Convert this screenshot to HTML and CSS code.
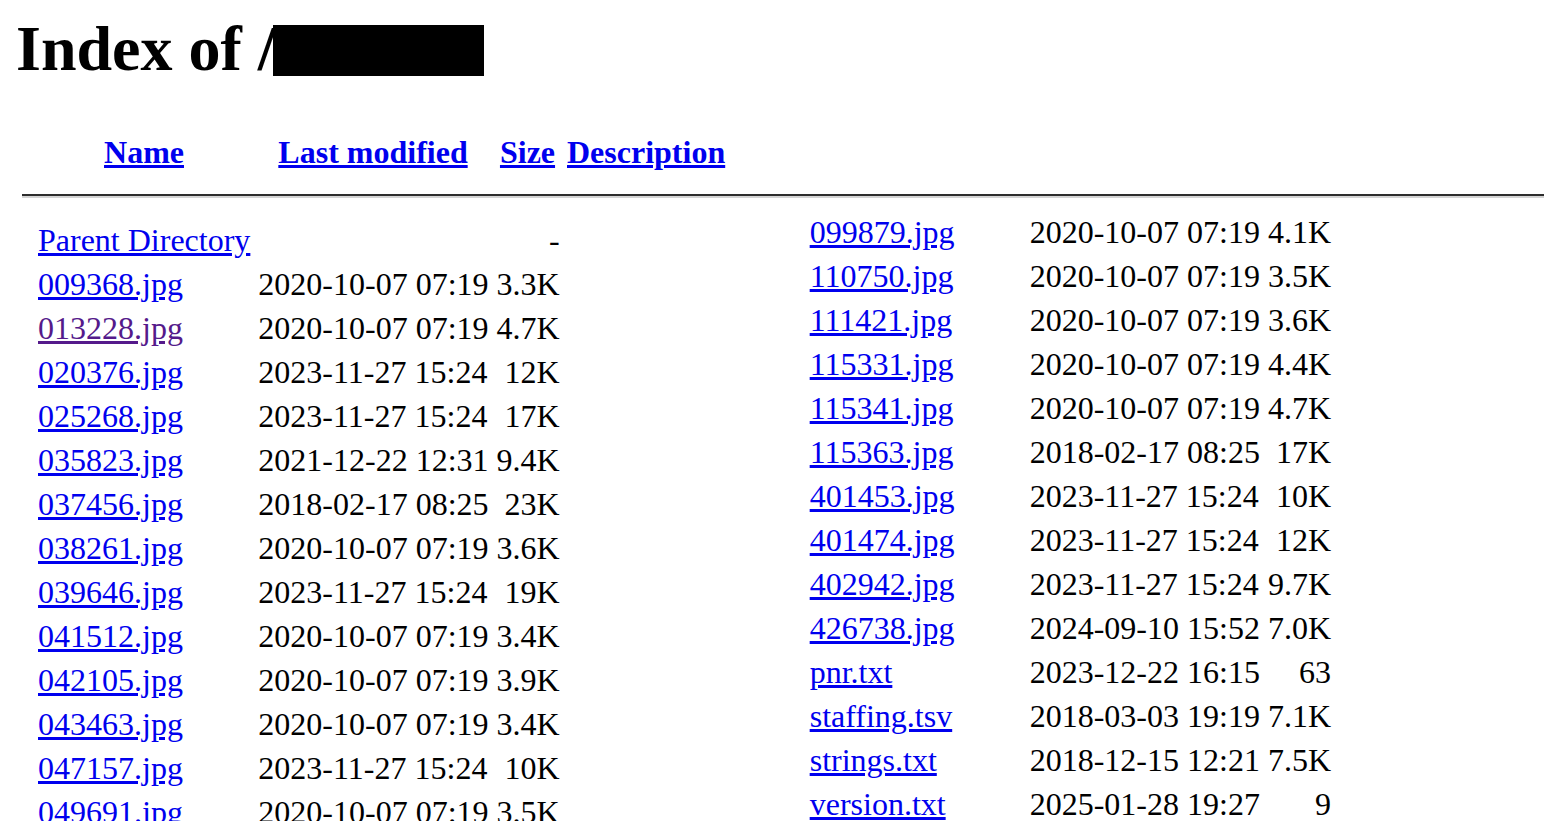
FILE: index.html
```html
<!DOCTYPE html>
<html lang="en">
<head>
    <meta charset="UTF-8">
    <title>Index of /</title>
    <link rel="stylesheet" href="styles.css">
</head>
<body>
    <h1>Index of /<span class="redacted"></span></h1>

    <table class="listing">
        <tr>
            <th class="icon"></th>
            <th class="name"><a href="?C=N;O=D">Name</a></th>
            <th class="date"><a href="?C=M;O=A">Last modified</a></th>
            <th class="size"><a href="?C=S;O=A">Size</a></th>
            <th class="desc"><a href="?C=D;O=A">Description</a></th>
        </tr>
    </table>
    <hr>

    <div class="columns">
        <table class="listing">
            <tr><td class="icon"></td><td class="name"><a href="../">Parent Directory</a></td><td class="date"></td><td class="size">-</td><td class="desc"></td></tr>
            <tr><td class="icon"></td><td class="name"><a href="009368.jpg">009368.jpg</a></td><td class="date">2020-10-07 07:19</td><td class="size">3.3K</td><td class="desc"></td></tr>
            <tr><td class="icon"></td><td class="name"><a class="visited" href="013228.jpg">013228.jpg</a></td><td class="date">2020-10-07 07:19</td><td class="size">4.7K</td><td class="desc"></td></tr>
            <tr><td class="icon"></td><td class="name"><a href="020376.jpg">020376.jpg</a></td><td class="date">2023-11-27 15:24</td><td class="size">12K</td><td class="desc"></td></tr>
            <tr><td class="icon"></td><td class="name"><a href="025268.jpg">025268.jpg</a></td><td class="date">2023-11-27 15:24</td><td class="size">17K</td><td class="desc"></td></tr>
            <tr><td class="icon"></td><td class="name"><a href="035823.jpg">035823.jpg</a></td><td class="date">2021-12-22 12:31</td><td class="size">9.4K</td><td class="desc"></td></tr>
            <tr><td class="icon"></td><td class="name"><a href="037456.jpg">037456.jpg</a></td><td class="date">2018-02-17 08:25</td><td class="size">23K</td><td class="desc"></td></tr>
            <tr><td class="icon"></td><td class="name"><a href="038261.jpg">038261.jpg</a></td><td class="date">2020-10-07 07:19</td><td class="size">3.6K</td><td class="desc"></td></tr>
            <tr><td class="icon"></td><td class="name"><a href="039646.jpg">039646.jpg</a></td><td class="date">2023-11-27 15:24</td><td class="size">19K</td><td class="desc"></td></tr>
            <tr><td class="icon"></td><td class="name"><a href="041512.jpg">041512.jpg</a></td><td class="date">2020-10-07 07:19</td><td class="size">3.4K</td><td class="desc"></td></tr>
            <tr><td class="icon"></td><td class="name"><a href="042105.jpg">042105.jpg</a></td><td class="date">2020-10-07 07:19</td><td class="size">3.9K</td><td class="desc"></td></tr>
            <tr><td class="icon"></td><td class="name"><a href="043463.jpg">043463.jpg</a></td><td class="date">2020-10-07 07:19</td><td class="size">3.4K</td><td class="desc"></td></tr>
            <tr><td class="icon"></td><td class="name"><a href="047157.jpg">047157.jpg</a></td><td class="date">2023-11-27 15:24</td><td class="size">10K</td><td class="desc"></td></tr>
            <tr><td class="icon"></td><td class="name"><a href="049691.jpg">049691.jpg</a></td><td class="date">2020-10-07 07:19</td><td class="size">3.5K</td><td class="desc"></td></tr>
        </table>

        <table class="listing listing-right">
            <tr><td class="icon"></td><td class="name"><a href="099879.jpg">099879.jpg</a></td><td class="date">2020-10-07 07:19</td><td class="size">4.1K</td><td class="desc"></td></tr>
            <tr><td class="icon"></td><td class="name"><a href="110750.jpg">110750.jpg</a></td><td class="date">2020-10-07 07:19</td><td class="size">3.5K</td><td class="desc"></td></tr>
            <tr><td class="icon"></td><td class="name"><a href="111421.jpg">111421.jpg</a></td><td class="date">2020-10-07 07:19</td><td class="size">3.6K</td><td class="desc"></td></tr>
            <tr><td class="icon"></td><td class="name"><a href="115331.jpg">115331.jpg</a></td><td class="date">2020-10-07 07:19</td><td class="size">4.4K</td><td class="desc"></td></tr>
            <tr><td class="icon"></td><td class="name"><a href="115341.jpg">115341.jpg</a></td><td class="date">2020-10-07 07:19</td><td class="size">4.7K</td><td class="desc"></td></tr>
            <tr><td class="icon"></td><td class="name"><a href="115363.jpg">115363.jpg</a></td><td class="date">2018-02-17 08:25</td><td class="size">17K</td><td class="desc"></td></tr>
            <tr><td class="icon"></td><td class="name"><a href="401453.jpg">401453.jpg</a></td><td class="date">2023-11-27 15:24</td><td class="size">10K</td><td class="desc"></td></tr>
            <tr><td class="icon"></td><td class="name"><a href="401474.jpg">401474.jpg</a></td><td class="date">2023-11-27 15:24</td><td class="size">12K</td><td class="desc"></td></tr>
            <tr><td class="icon"></td><td class="name"><a href="402942.jpg">402942.jpg</a></td><td class="date">2023-11-27 15:24</td><td class="size">9.7K</td><td class="desc"></td></tr>
            <tr><td class="icon"></td><td class="name"><a href="426738.jpg">426738.jpg</a></td><td class="date">2024-09-10 15:52</td><td class="size">7.0K</td><td class="desc"></td></tr>
            <tr><td class="icon"></td><td class="name"><a href="pnr.txt">pnr.txt</a></td><td class="date">2023-12-22 16:15</td><td class="size">63</td><td class="desc"></td></tr>
            <tr><td class="icon"></td><td class="name"><a href="staffing.tsv">staffing.tsv</a></td><td class="date">2018-03-03 19:19</td><td class="size">7.1K</td><td class="desc"></td></tr>
            <tr><td class="icon"></td><td class="name"><a href="strings.txt">strings.txt</a></td><td class="date">2018-12-15 12:21</td><td class="size">7.5K</td><td class="desc"></td></tr>
            <tr><td class="icon"></td><td class="name"><a href="version.txt">version.txt</a></td><td class="date">2025-01-28 19:27</td><td class="size">9</td><td class="desc"></td></tr>
        </table>
    </div>
</body>
</html>
```

FILE: styles.css
```css
/* directory listing, drawn at 2x */
html {
    overflow: hidden;
}

body {
    margin: 0;
    padding: 0 0 0 16px;
    font-family: "Liberation Serif", "Times New Roman", serif;
    font-size: 32px;
    color: #000;
    background: #fff;
}

a {
    color: #0000ee;
}

a.visited {
    color: #551a8b;
}

h1 {
    font-size: 64px;
    font-weight: bold;
    line-height: 74px;
    margin: 12px 0 42px;
}

.redacted {
    display: inline-block;
    width: 211px;
    height: 51px;
    margin-left: -3px;
    background: #000;
    vertical-align: -6px;
}

/* Table */
.listing {
    border-spacing: 4px;
    border-collapse: separate;
}

.listing th,
.listing td {
    padding: 2px;
    line-height: 36px;
    white-space: nowrap;
}

.listing td {
    text-align: left;
}

.icon {
    width: 8px;
}

.name {
    width: 212px;
}

.date {
    width: 230px;
}

.size {
    width: 63px;
}

.listing td.size {
    text-align: right;
}

.desc {
    width: 158px;
}

hr {
    height: 0;
    margin: 18px 0 18px 6px;
    border: none;
    border-top: 2px solid #2d2d2d;
    border-bottom: 2px solid #d4d4d4;
}

.columns {
    display: flex;
    align-items: flex-start;
    gap: 56px;
}

.listing-right {
    margin-top: -8px;
}
```
